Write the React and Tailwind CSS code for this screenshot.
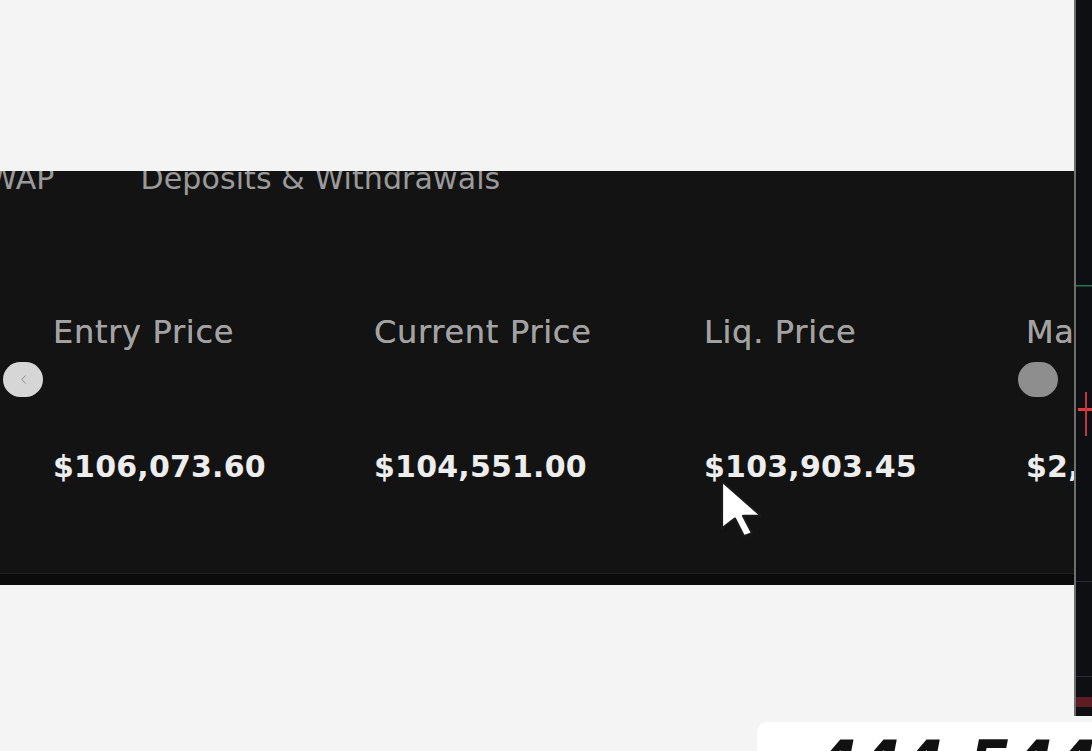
import { ChevronLeft } from "lucide-react";

// ── Data ──────────────────────────────────────────────────────────────────

const stats = [
  { key: "entry", label: "Entry Price", value: "$106,073.60", width: "w-[321px]" },
  { key: "current", label: "Current Price", value: "$104,551.00", width: "w-[330px]" },
  { key: "liq", label: "Liq. Price", value: "$103,903.45", width: "w-[322px]" },
  { key: "margin", label: "Margin", value: "$2,047.19", width: "w-[300px]" },
];

// ── Pieces ────────────────────────────────────────────────────────────────

function StatColumn({ label, value, width }) {
  return (
    <div className={`${width} shrink-0 flex flex-col whitespace-nowrap`}>
      <div className="h-[32px] text-[32px] leading-none tracking-[0.7px] text-[#a2a2a2] [text-shadow:0_0_0.6px_#a2a2a2]">
        {label}
      </div>
      <div className="mt-[104px] h-[30px] text-[30px] leading-none font-bold tracking-[0.2px] text-[#ededed]">
        {value}
      </div>
    </div>
  );
}

function Cursor() {
  return (
    <svg
      className="absolute left-[718px] top-[307px]"
      width="47"
      height="62"
      viewBox="0 0 12 19"
      preserveAspectRatio="none"
    >
      <path
        d="M1 1 L1 15.5 L4.3 12.4 L6.6 17.8 L8.7 16.9 L6.4 11.6 L11 11.6 Z"
        fill="#ffffff"
        stroke="#1a1a1a"
        strokeWidth="0.6"
        strokeLinejoin="round"
      />
    </svg>
  );
}

function ChartStrip() {
  return (
    <svg width="16" height="716" viewBox="0 0 16 716" className="block">
      <rect x="0" y="0" width="16" height="716" fill="#0e0f13" />
      <rect x="0" y="285" width="16" height="1.5" fill="#237556" />
      <rect x="2" y="408" width="14" height="3" fill="#e23b3f" />
      <rect x="9" y="392" width="2" height="44" fill="#c8343a" />
      <rect x="0" y="581" width="16" height="1" fill="#2b2c31" />
      <rect x="0" y="676" width="16" height="1" fill="#2b2c31" />
      <rect x="0" y="697" width="16" height="10" fill="#5e1c25" />
    </svg>
  );
}

// ── Page ──────────────────────────────────────────────────────────────────

export default function App() {
  return (
    <div className="w-[1092px] h-[751px] overflow-hidden bg-[#f4f4f4] flex flex-col font-['DejaVu_Sans',sans-serif]">
      <div className="flex h-[722px]">
        <div className="w-[1074px] flex flex-col">
          <div className="h-[171px]" />

          {/* Position panel */}
          <section className="relative h-[414px] bg-[#131313] overflow-hidden flex flex-col">
            <div className="flex gap-[86px] -mt-[7px] -ml-[33px] h-[30px] text-[30px] leading-none tracking-[0.1px] text-[#9a9a9a] whitespace-nowrap">
              <span>VWAP</span>
              <span>Deposits &amp; Withdrawals</span>
            </div>

            <div className="relative mt-[122px] flex pl-[53px]">
              {stats.map((s) => (
                <StatColumn key={s.key} label={s.label} value={s.value} width={s.width} />
              ))}

              <button
                type="button"
                className="absolute left-[3px] top-[46px] w-[40px] h-[35px] rounded-full bg-[#d6d6d6] flex items-center justify-center"
              >
                <ChevronLeft size={15} strokeWidth={1.6} color="#8a8a8a" />
              </button>
              <button
                type="button"
                className="absolute right-[16px] top-[46px] w-[40px] h-[35px] rounded-full bg-[#8e8e8e]"
              />
            </div>

            <div className="mt-auto h-[12px] bg-[#0b0b0b] border-t border-[#1f1f1f]" />

            <Cursor />
          </section>
        </div>

        <div className="w-[2px] h-[716px] bg-[#6e6e6e]" />
        <div className="w-[16px] h-[716px]">
          <ChartStrip />
        </div>
      </div>

      {/* Bottom card */}
      <div className="flex h-[29px]">
        <div className="w-[757px]" />
        <div className="flex-1 bg-white rounded-tl-[10px] overflow-hidden pl-[58px] pt-[11px]">
          <div className="text-[62px] leading-none font-bold italic text-[#111] whitespace-nowrap">
            444,544.8
          </div>
        </div>
      </div>
    </div>
  );
}
